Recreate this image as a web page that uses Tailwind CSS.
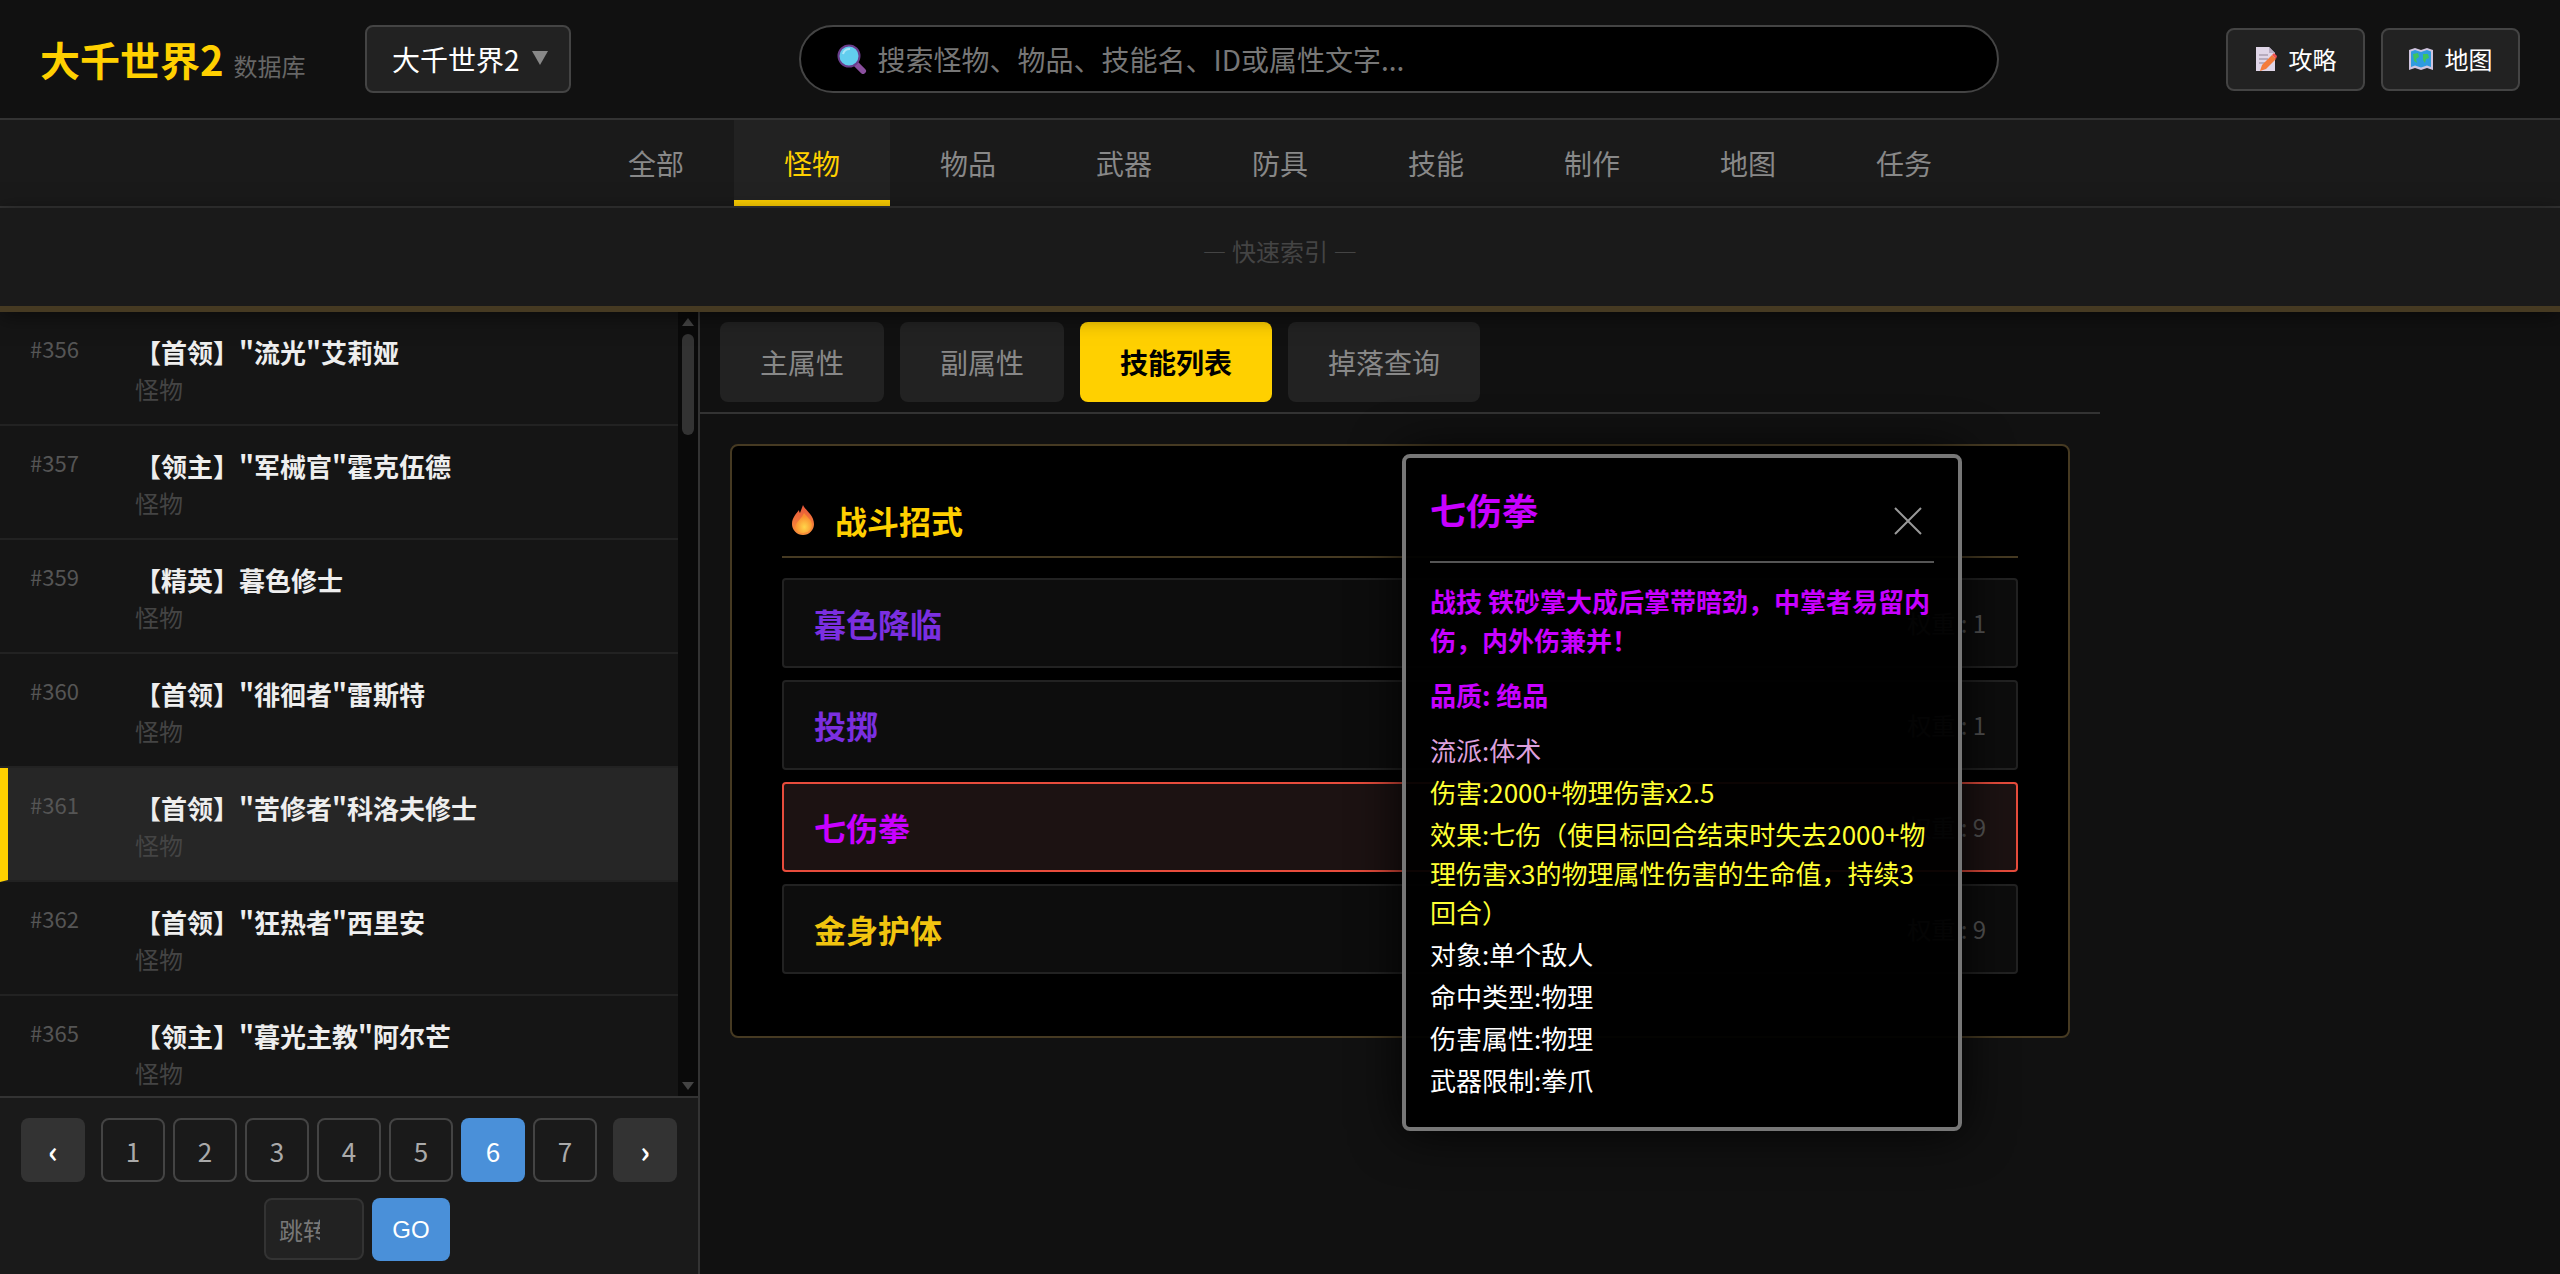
<!DOCTYPE html>
<html lang="zh-CN">
  <head>
    <meta charset="UTF-8" />
    <title>大千世界2 数据库</title>
    <script src="https://cdn.jsdelivr.net/npm/@tailwindcss/browser@4"></script>
  </head>
  <body class="relative w-[2560px] h-[1274px] overflow-hidden bg-[#111111] text-white font-['Noto_Sans_CJK_SC','Liberation_Sans',sans-serif]">
    <!-- 顶栏 -->
    <header class="h-[120px] flex items-center px-10 bg-[#111111] border-b-2 border-[#333333]">
      <div class="flex items-baseline gap-[10px] w-[325px]">
        <span class="text-[40px] font-bold text-[#ffd000]">大千世界2</span>
        <span class="text-[24px] text-[#666666]">数据库</span>
      </div>
      <div class="w-[206px] h-[68px] flex items-center pl-[25px] bg-[#222222] border-2 border-[#444444] rounded-lg text-[28px]">
        <span>大千世界2</span>
        <svg class="ml-[12px] mt-[-2px]" width="16" height="16" viewBox="0 0 16 16"><path d="M0 1h16L8 15z" fill="#888888" /></svg>
      </div>
      <div class="flex-1 flex justify-center">
        <div class="w-[1200px] h-[68px] flex items-center pl-[36px] bg-black border-2 border-[#444444] rounded-[34px]">
          <svg width="30" height="30" viewBox="0 0 30 30">
            <path d="M19 20l7 7" stroke="#8a4f9e" stroke-width="6" stroke-linecap="round" />
            <circle cx="12" cy="12" r="10.5" fill="#62cdee" stroke="#6a3d8c" stroke-width="2" />
            <path d="M6 10a7 7 0 0 1 7-5" stroke="#a9e6f7" stroke-width="2" fill="none" />
          </svg>
          <span class="ml-[11px] text-[28px] text-[#777777]">搜索怪物、物品、技能名、ID或属性文字...</span>
        </div>
      </div>
      <div class="flex gap-4">
        <div class="w-[139px] h-[63px] flex items-center justify-center gap-[12px] bg-[#222222] border-2 border-[#444444] rounded-lg text-[24px]">
          <svg width="22" height="24" viewBox="0 0 22 24">
            <path d="M1 0h13l6 6v18H1z" fill="#e0d6e8" />
            <path d="M14 0l6 6h-6z" fill="#b8adc4" />
            <path d="M4 8h9M4 12h9M4 16h6" stroke="#a99fb0" stroke-width="1.5" />
            <path d="M5 24l2-6L17 8l4 4-10 10z" fill="#f47b3a" />
            <path d="M17 8l2-2 3 3-1 3z" fill="#ef5350" />
          </svg>
          <span>攻略</span>
        </div>
        <div class="w-[139px] h-[63px] flex items-center justify-center gap-[12px] bg-[#222222] border-2 border-[#444444] rounded-lg text-[24px]">
          <svg width="24" height="22" viewBox="0 0 24 22">
            <path d="M0 2l6-2 6 2 6-2 6 2v20l-6-2-6 2-6-2-6 2z" fill="#cfc4df" />
            <path d="M2 3.500l4-1.500 6 2 6-2 4 1.500v15.500l-4-1.500-6 2-6-2-4 1.500z" fill="#2f9be0" />
            <path d="M4 6l5-1 1 4-3 2 1 4-3-2zM14 6l5 0 1 4-3 1-1 4-2-3z" fill="#3fc45f" />
          </svg>
          <span>地图</span>
        </div>
      </div>
    </header>

    <!-- 分类导航 -->
    <nav class="h-[88px] flex justify-center bg-[#1a1a1a] border-b-2 border-[#333333] text-[28px] text-[#888888]">
      <a class="w-[156px] h-[86px] flex items-center justify-center">全部</a>
      <a class="w-[156px] h-[86px] flex items-center justify-center pt-[6px] bg-[#222222] border-b-[6px] border-[#ffd000] text-[#ffd000]">怪物</a>
      <a class="w-[156px] h-[86px] flex items-center justify-center">物品</a>
      <a class="w-[156px] h-[86px] flex items-center justify-center">武器</a>
      <a class="w-[156px] h-[86px] flex items-center justify-center">防具</a>
      <a class="w-[156px] h-[86px] flex items-center justify-center">技能</a>
      <a class="w-[156px] h-[86px] flex items-center justify-center">制作</a>
      <a class="w-[156px] h-[86px] flex items-center justify-center">地图</a>
      <a class="w-[156px] h-[86px] flex items-center justify-center">任务</a>
    </nav>

    <!-- 快速索引 -->
    <div class="relative z-10 h-[104px] flex items-center justify-center pb-[12px] bg-[#1a1a1a] border-b-[6px] border-[#463a22] text-[24px] text-[#444444] shadow-[0_4px_20px_rgba(0,0,0,0.5)]">— 快速索引 —</div>

    <main class="flex h-[962px]">
      <!-- 左侧列表 -->
      <aside class="w-[700px] flex flex-col border-r-2 border-[#333333]">
        <div class="h-[786px] flex overflow-hidden border-b-2 border-[#333333]">
          <ul class="w-[678px] bg-[#151515]">
            <li class="h-[114px] flex pt-5 pl-[30px] border-b-2 border-[#222222]">
              <span class="w-[105px] text-[22px] leading-[32px] text-[#555555]">#356</span>
              <div>
                <p class="text-[26px] leading-[39px] font-bold text-[#eeeeee]">【首领】"流光"艾莉娅</p>
                <p class="text-[24px] leading-[36px] text-[#444444]">怪物</p>
              </div>
            </li>
            <li class="h-[114px] flex pt-5 pl-[30px] border-b-2 border-[#222222]">
              <span class="w-[105px] text-[22px] leading-[32px] text-[#555555]">#357</span>
              <div>
                <p class="text-[26px] leading-[39px] font-bold text-[#eeeeee]">【领主】"军械官"霍克伍德</p>
                <p class="text-[24px] leading-[36px] text-[#444444]">怪物</p>
              </div>
            </li>
            <li class="h-[114px] flex pt-5 pl-[30px] border-b-2 border-[#222222]">
              <span class="w-[105px] text-[22px] leading-[32px] text-[#555555]">#359</span>
              <div>
                <p class="text-[26px] leading-[39px] font-bold text-[#eeeeee]">【精英】暮色修士</p>
                <p class="text-[24px] leading-[36px] text-[#444444]">怪物</p>
              </div>
            </li>
            <li class="h-[114px] flex pt-5 pl-[30px] border-b-2 border-[#222222]">
              <span class="w-[105px] text-[22px] leading-[32px] text-[#555555]">#360</span>
              <div>
                <p class="text-[26px] leading-[39px] font-bold text-[#eeeeee]">【首领】"徘徊者"雷斯特</p>
                <p class="text-[24px] leading-[36px] text-[#444444]">怪物</p>
              </div>
            </li>
            <li class="h-[114px] flex pt-5 pl-[22px] bg-[#262626] border-l-[8px] border-l-[#ffd000] border-b-2 border-b-[#222222]">
              <span class="w-[105px] text-[22px] leading-[32px] text-[#555555]">#361</span>
              <div>
                <p class="text-[26px] leading-[39px] font-bold text-[#eeeeee]">【首领】"苦修者"科洛夫修士</p>
                <p class="text-[24px] leading-[36px] text-[#444444]">怪物</p>
              </div>
            </li>
            <li class="h-[114px] flex pt-5 pl-[30px] border-b-2 border-[#222222]">
              <span class="w-[105px] text-[22px] leading-[32px] text-[#555555]">#362</span>
              <div>
                <p class="text-[26px] leading-[39px] font-bold text-[#eeeeee]">【首领】"狂热者"西里安</p>
                <p class="text-[24px] leading-[36px] text-[#444444]">怪物</p>
              </div>
            </li>
            <li class="h-[114px] flex pt-5 pl-[30px] border-b-2 border-[#222222]">
              <span class="w-[105px] text-[22px] leading-[32px] text-[#555555]">#365</span>
              <div>
                <p class="text-[26px] leading-[39px] font-bold text-[#eeeeee]">【领主】"暮光主教"阿尔芒</p>
                <p class="text-[24px] leading-[36px] text-[#444444]">怪物</p>
              </div>
            </li>
          </ul>
          <!-- 滚动条 -->
          <div class="w-[20px] flex flex-col items-center pt-[6px] pb-[6px] bg-[#0a0a0a]">
            <svg width="12" height="8" viewBox="0 0 12 8"><path d="M6 0l6 8H0z" fill="#444444" /></svg>
            <div class="w-[12px] h-[101px] mt-[8px] rounded-md bg-[#333333]"></div>
            <svg class="mt-auto" width="12" height="8" viewBox="0 0 12 8"><path d="M0 0h12L6 8z" fill="#444444" /></svg>
          </div>
        </div>
        <!-- 分页 -->
        <div class="flex-1 bg-[#1a1a1a] pt-5">
          <div class="flex justify-center gap-2 text-[26px] text-[#aaaaaa]">
            <button class="w-16 h-16 mr-2 flex items-center justify-center rounded-lg bg-[#333333] text-white text-[30px] font-bold">‹</button>
            <button class="w-16 h-16 flex items-center justify-center rounded-lg border-2 border-[#444444]">1</button>
            <button class="w-16 h-16 flex items-center justify-center rounded-lg border-2 border-[#444444]">2</button>
            <button class="w-16 h-16 flex items-center justify-center rounded-lg border-2 border-[#444444]">3</button>
            <button class="w-16 h-16 flex items-center justify-center rounded-lg border-2 border-[#444444]">4</button>
            <button class="w-16 h-16 flex items-center justify-center rounded-lg border-2 border-[#444444]">5</button>
            <button class="w-16 h-16 flex items-center justify-center rounded-lg bg-[#4a90d9] text-white">6</button>
            <button class="w-16 h-16 flex items-center justify-center rounded-lg border-2 border-[#444444]">7</button>
            <button class="w-16 h-16 ml-2 flex items-center justify-center rounded-lg bg-[#333333] text-white text-[30px] font-bold">›</button>
          </div>
          <div class="flex justify-center gap-2 mt-4 ml-4">
            <input type="text" placeholder="跳转" class="w-[100px] h-[62px] pl-[13px] pr-[42px] bg-[#222222] border-2 border-[#333333] rounded-lg text-[24px] placeholder:text-[#777777]" />
            <button class="w-[78px] h-[63px] rounded-lg bg-[#4a90d9] text-[24px] text-white font-['Liberation_Sans',sans-serif]">GO</button>
          </div>
        </div>
      </aside>

      <!-- 右侧详情 -->
      <section class="w-[1400px]">
        <div class="h-[102px] flex gap-4 pt-[10px] pl-5 border-b-2 border-[#333333] text-[28px] text-[#888888]">
          <button class="w-[164px] h-[80px] rounded-lg bg-[#222222]">主属性</button>
          <button class="w-[164px] h-[80px] rounded-lg bg-[#222222]">副属性</button>
          <button class="w-[192px] h-[80px] rounded-lg bg-[#ffd000] font-bold text-black">技能列表</button>
          <button class="w-[192px] h-[80px] rounded-lg bg-[#222222]">掉落查询</button>
        </div>
        <div class="w-[1340px] h-[594px] mt-[30px] ml-[30px] px-[50px] pt-[40px] bg-black border-2 border-[#463a22] rounded-lg">
          <div class="h-[72px] flex items-center gap-[20px] pb-[2px] border-b-2 border-[#463a22] text-[32px] font-bold text-[#ffd000]">
            <svg class="ml-[9px]" width="24" height="30" viewBox="0 0 24 30">
              <defs>
                <linearGradient id="flame" x1="0" y1="0" x2="0" y2="1">
                  <stop offset="0" stop-color="#e8553a" />
                  <stop offset="1" stop-color="#f9923a" />
                </linearGradient>
                <radialGradient id="flameCore" cx="0.55" cy="0.7" r="0.55">
                  <stop offset="0" stop-color="#ffd54a" />
                  <stop offset="1" stop-color="#fb8c2e" />
                </radialGradient>
              </defs>
              <path d="M12 0c2 5 11 10 11 19a11 11 0 0 1-22 0C1 13 5 9 8 5c0 2 1 3 1 3z" fill="url(#flame)" />
              <path d="M13 8c3 4 8 7 8 12a9 9 0 0 1-17 3c0-6 7-9 9-15z" fill="url(#flameCore)" />
            </svg>
            <span>战斗招式</span>
          </div>
          <div class="mt-[20px] flex flex-col gap-3">
            <div class="h-[90px] flex items-center justify-between pl-[30px] pr-[30px] bg-[#0d0d0d] border-2 border-[#222222] rounded">
              <span class="text-[32px] font-bold text-[#7b2fe0]">暮色降临</span>
              <span class="text-[24px] text-[#555555]">权重 : 1</span>
            </div>
            <div class="h-[90px] flex items-center justify-between pl-[30px] pr-[30px] bg-[#0d0d0d] border-2 border-[#222222] rounded">
              <span class="text-[32px] font-bold text-[#7b2fe0]">投掷</span>
              <span class="text-[24px] text-[#555555]">权重 : 1</span>
            </div>
            <div class="h-[90px] flex items-center justify-between pl-[30px] pr-[30px] bg-[#1c1212] border-2 border-[#e74c3c] rounded">
              <span class="text-[32px] font-bold text-[#c800ff]">七伤拳</span>
              <span class="text-[24px] text-[#555555]">权重 : 9</span>
            </div>
            <div class="h-[90px] flex items-center justify-between pl-[30px] pr-[30px] bg-[#0d0d0d] border-2 border-[#222222] rounded">
              <span class="text-[32px] font-bold text-[#f1c40f]">金身护体</span>
              <span class="text-[24px] text-[#555555]">权重 : 9</span>
            </div>
          </div>
        </div>
      </section>
    </main>

    <!-- 技能详情弹窗 -->
    <div class="absolute left-[1402px] top-[454px] z-20 w-[560px] h-[677px] px-[24px] pt-[24px] bg-black/95 border-4 border-[#777777] rounded-lg text-[26px] leading-[39px] shadow-[0_0_50px_rgba(0,0,0,0.9)]">
      <div class="h-[81px] flex items-start justify-between border-b-2 border-[#555555]">
        <span class="text-[36px] leading-[54px] font-bold text-[#c800ff]">七伤拳</span>
        <svg class="mt-[24px] mr-[11px]" width="30" height="30" viewBox="0 0 30 30"><path d="M2 2l26 26M28 2L2 28" stroke="#999999" stroke-width="2" /></svg>
      </div>
      <p class="mt-[18px] font-bold text-[#c800ff]">战技 铁砂掌大成后掌带暗劲，中掌者易留内伤，内外伤兼并！</p>
      <p class="mt-[16px] font-bold text-[#c800ff]">品质: 绝品</p>
      <p class="mt-[16px] text-[#dda0dd]">流派:体术</p>
      <p class="mt-[3px] text-[#ffff33]">伤害:2000+物理伤害x2.5</p>
      <p class="mt-[3px] text-[#ffff33]">效果:七伤（使目标回合结束时失去2000+物理伤害x3的物理属性伤害的生命值，持续3回合）</p>
      <p class="mt-[3px]">对象:单个敌人</p>
      <p class="mt-[3px]">命中类型:物理</p>
      <p class="mt-[3px]">伤害属性:物理</p>
      <p class="mt-[3px]">武器限制:拳爪</p>
    </div>
  </body>
</html>
